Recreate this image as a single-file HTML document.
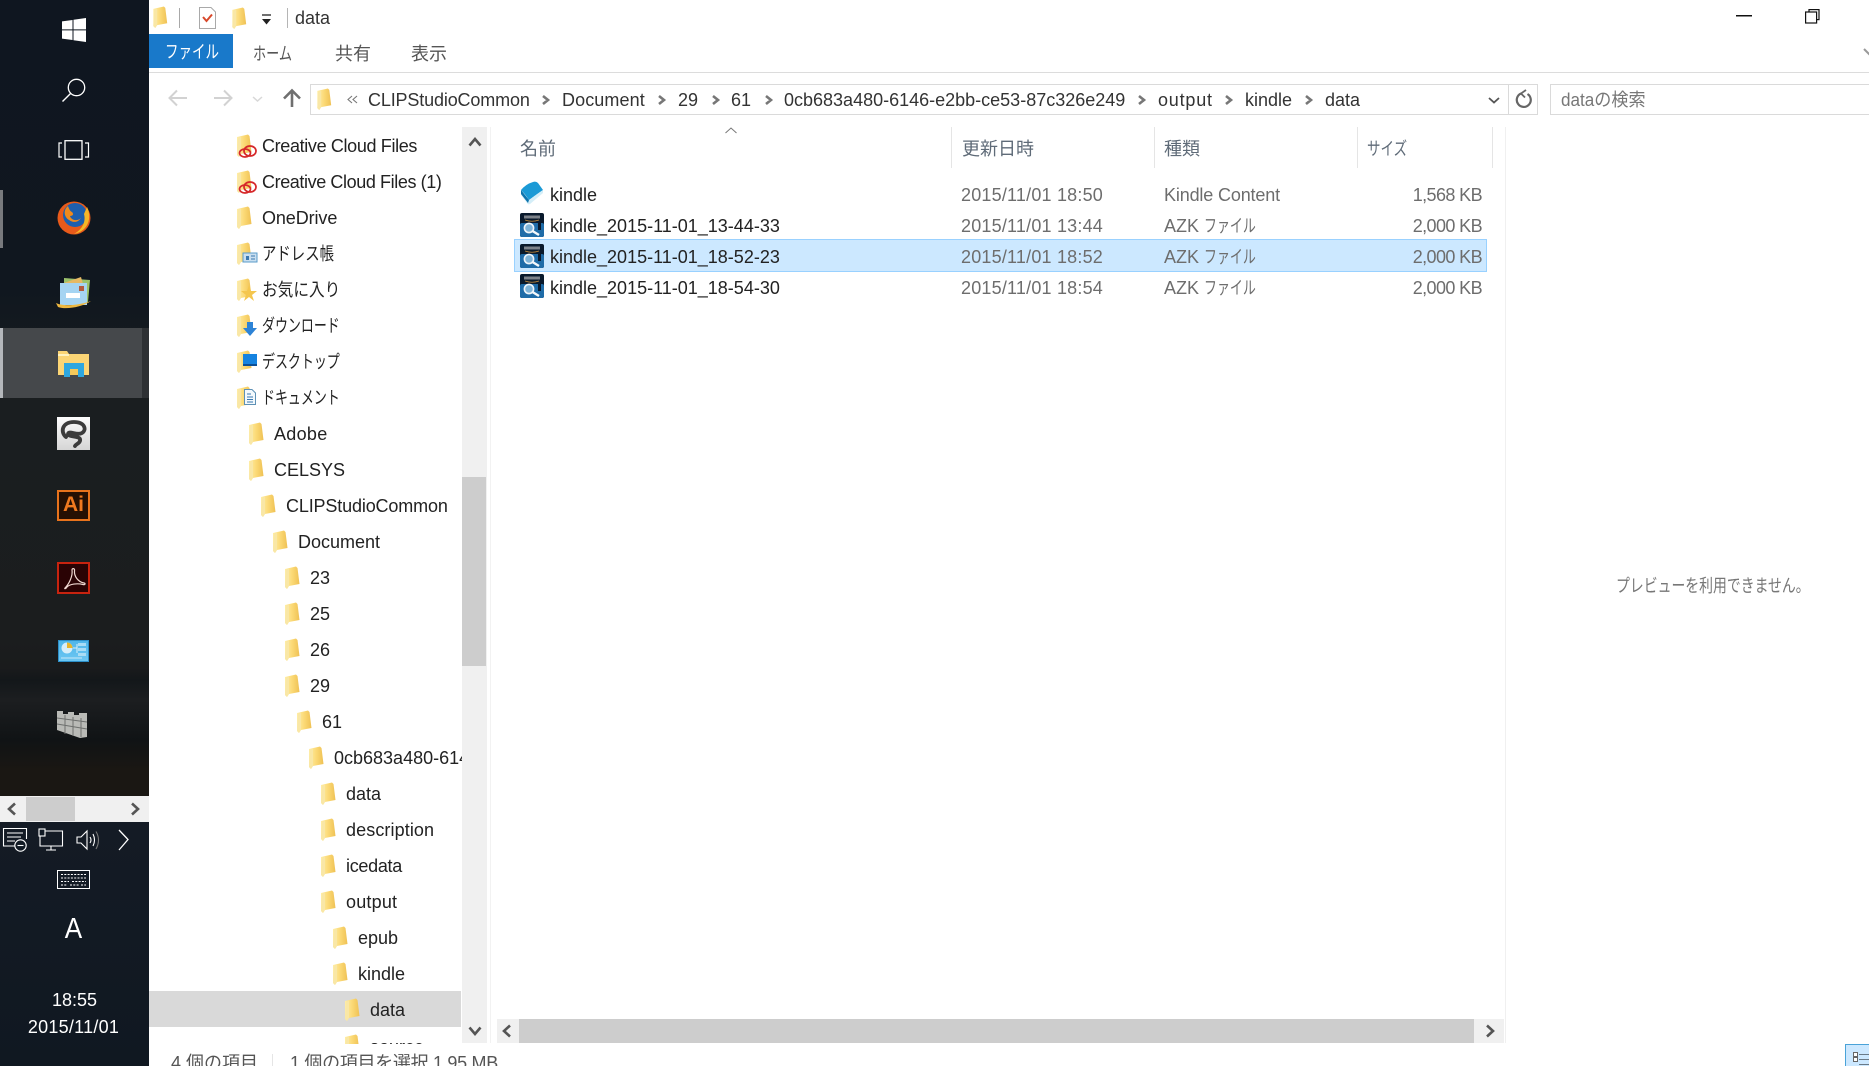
<!DOCTYPE html>
<html lang="ja"><head><meta charset="utf-8"><title>data</title>
<style>
html,body{margin:0;padding:0;width:1869px;height:1066px;overflow:hidden;background:#fff}
body{position:relative;font-family:"Liberation Sans","Noto Sans CJK JP",sans-serif;font-size:18px;color:#222}
.a{position:absolute}
.t{position:absolute;white-space:nowrap;line-height:22px;height:22px}
.k{transform-origin:0 50%}
.s{display:inline-block;transform:scaleX(.72);transform-origin:0 50%;width:48px}
.g{color:#6d6d6d}
.h{color:#5f6b78}
.w{color:#fff}
svg{position:absolute;overflow:visible}
</style></head><body>
<svg width="0" height="0" style="left:0;top:0">
<defs>
<linearGradient id="fg" x1="0" x2="1" y1="0" y2="0"><stop offset="0" stop-color="#ffeea8"/><stop offset=".5" stop-color="#fbd975"/><stop offset="1" stop-color="#efc154"/></linearGradient>
<symbol id="f" viewBox="0 0 15 23"><path d="M0 3 L11 0.500 L12.500 2 L14.500 18 L4 20 L2 23 L0 21Z" fill="url(#fg)"/><path d="M0 21 L1 4 L4 3 L4 20 L2 23Z" fill="#f9e7a6"/></symbol>
<symbol id="z" viewBox="0 0 24 24"><rect width="24" height="24" rx="2" fill="#0a1a2c"/><rect y="10" width="24" height="14" rx="2" fill="#1f6ca8"/><rect x="4" y="2.500" width="16" height="3" fill="#7d838a"/><path d="M5 7 Q12 9.500 19 7" fill="none" stroke="#c28a3a" stroke-width=".8"/><circle cx="9" cy="15" r="4.600" fill="#7fb4d8" stroke="#eef5fa" stroke-width="1.600"/><path d="M12.500 18 L19 22" stroke="#f4f8fb" stroke-width="2.400"/><rect x="18" y="8" width="3" height="9" fill="#0a1a2c"/></symbol>
</defs></svg>

<!-- taskbar -->
<div class="a" style="left:0;top:0;width:149px;height:1066px;background:linear-gradient(#0f1620 0,#10171f 290px,#1a1e20 400px,#1b1d1e 640px,#1a1b1c 668px,#13171a 680px,#1c1e20 700px,#101315 740px,#1a1713 770px,#1a1713 796px,#141b25 822px,#101821 1066px)"></div>
<div class="a" style="left:3px;top:328px;width:139px;height:70px;background:#45484b"></div>
<div class="a" style="left:142px;top:328px;width:7px;height:70px;background:#2e3134"></div>
<div class="a" style="left:0;top:328px;width:3px;height:70px;background:#b4b7bb"></div>
<div class="a" style="left:0;top:190px;width:3px;height:58px;background:#787a7d"></div>
<svg style="left:62px;top:18px" width="24" height="24" viewBox="0 0 24 24"><path d="M0 3.400 L10.500 2 V11.400 H0Z M11.500 1.800 L24 0 V11.400 H11.500Z M0 12.400 H10.500 V22 L0 20.600Z M11.500 12.400 H24 V24 L11.500 22.200Z" fill="#fff"/></svg>
<svg style="left:62px;top:78px" width="24" height="24" viewBox="0 0 24 24"><circle cx="14.500" cy="9.500" r="8.200" fill="none" stroke="#fff" stroke-width="1.300"/><path d="M8.800 15.200 L0.500 23.500" stroke="#fff" stroke-width="1.400"/></svg>
<svg style="left:58px;top:140px" width="32" height="20" viewBox="0 0 32 20"><rect x="7" y=".7" width="17" height="18.600" fill="none" stroke="#fff" stroke-width="1.300"/><path d="M4 3 H1 V17 H4 M27 3 H30.500 V17 H27" fill="none" stroke="#fff" stroke-width="1.200"/></svg>
<svg style="left:57px;top:201px" width="34" height="34" viewBox="0 0 34 34"><circle cx="17" cy="17" r="16.500" fill="#e85a1a"/><circle cx="18" cy="14" r="12" fill="#1e5fae"/><path d="M30 6 C35 16 32 30 17 33 C26 28 29 20 27 13Z" fill="#f6b727"/><path d="M11 5 C6 9 7 16 12 19 C18 23 22 20 24 17 C20 21 14 19 13 15 C16 15 17 13 15 11 C13 10 12 8 11 5Z" fill="#f08a1d"/></svg>
<svg style="left:56px;top:274px" width="36" height="36" viewBox="0 0 36 36"><path d="M8 4 L34 6 L32 28 L8 26Z" fill="#9bc26b"/><path d="M5 10 L25 3 L31 24 L12 30Z" fill="#e6b965"/><path d="M4 9 H31 V31 H4Z" fill="#a5d4f2"/><rect x="10" y="19" width="14" height="5" fill="#fff"/><rect x="23" y="12" width="5" height="5" fill="#b55b3f"/><path d="M0 29 C8 33 24 31 35 27 C26 33 10 36 2 33Z" fill="#eeb73f"/></svg>
<svg style="left:57px;top:349px" width="33" height="28" viewBox="0 0 33 28"><path d="M1 2 H10 L12 5 H32 V26 H1Z" fill="#fbd575"/><path d="M1 5 H12 V7 H1Z" fill="#fff2c0"/><path d="M7 14 H27 V28 H21 V20 H13 V28 H7Z" fill="#2ea7e0"/><rect x="13" y="20" width="8" height="6" fill="#f5c95a"/></svg>
<div class="a" style="left:57px;top:417px;width:33px;height:33px;background:linear-gradient(#fdfdfd,#d5d5d5)"></div>
<svg style="left:57px;top:417px" width="33" height="33" viewBox="0 0 33 33"><path d="M9 20 C3 15 5 5 17 5 C28 5 30 13 25 16 C20 19 12 13 11 17 C11 20 22 19 23 22 C24 26 19 27 18 29" fill="none" stroke="#3c3c3c" stroke-width="3.800" stroke-linecap="round"/></svg>
<div class="a" style="left:57px;top:490px;width:33px;height:31px;box-sizing:border-box;border:2px solid #e8731c;background:#261003"></div>
<div class="t" style="left:57px;top:490px;width:33px;height:31px;line-height:30px;text-align:center;color:#f0791f;font-weight:bold;font-size:21px">Ai</div>
<div class="a" style="left:57px;top:562px;width:33px;height:32px;box-sizing:border-box;border:2px solid #c8230f;background:#2a0304"></div>
<svg style="left:57px;top:562px" width="33" height="32" viewBox="0 0 33 32"><path d="M8 26 C12 22 16 14 15 8 C15 6 18 6 17.500 9 C17 14 21 20 27 21 C29 21.500 28 23 26 22.500 C20 21 13 22 10 25 C9 27 7 27 8 26Z" fill="none" stroke="#efd7d0" stroke-width="1.200"/></svg>
<div class="a" style="left:58px;top:640px;width:31px;height:22px;background:linear-gradient(#4fb6ea,#6cc6f2);border:1px solid #2d8fc8;box-sizing:border-box"></div>
<svg style="left:58px;top:640px" width="31" height="22" viewBox="0 0 31 22"><circle cx="9" cy="8" r="5.500" fill="#d8eef9"/><path d="M9 8 V2.500 A5.500 5.500 0 0 1 14.500 8Z" fill="#e8b52c"/><path d="M15 8 H19 M19 4 V13" stroke="#d8eef9" stroke-width="1"/><path d="M20 3 H28 V6 H20Z M20 8 H28 V11 H20Z M20 13 H28 V16 H20Z" fill="#a9dcf5"/><path d="M3 18 H24" stroke="#a9dcf5" stroke-width="1.500"/></svg>
<svg style="left:57px;top:710px" width="31" height="28" viewBox="0 0 31 28"><path d="M0 1 H6 V4 H11 V2 H17 V5 H22 V3 H30 V27 L23 28 L0 20Z" fill="#b9bab6"/><path d="M0 8 L30 12 M0 14 L30 19 M8 5 V24 M16 7 V26 M24 8 V27" stroke="#6e706e" stroke-width="1"/></svg>
<div class="a" style="left:0;top:796px;width:149px;height:26px;background:#f0f0f0"></div>
<div class="a" style="left:26px;top:797px;width:49px;height:24px;background:#cdcdcd"></div>
<svg style="left:6px;top:802px" width="136" height="14" viewBox="0 0 136 14"><path d="M9 1.500 L3 7 L9 12.500" fill="none" stroke="#555" stroke-width="2.600"/><path d="M126 1.500 L132 7 L126 12.500" fill="none" stroke="#555" stroke-width="2.600"/></svg>
<svg style="left:3px;top:828px" width="126" height="24" viewBox="0 0 126 24" fill="none" stroke="#fff" stroke-width="1.100"><path d="M13 18 H.5 V.5 H23.500 V11"/><path d="M4 5 H20 M4 9 H18 M4 13 H12"/><circle cx="17.500" cy="17.500" r="5.700" fill="#111a24"/><path d="M14.500 17.500 H20.500"/><path d="M37 3 H59.500 V18 H37Z M48 18 V21.500 M43 22 H53"/><rect x="36" y="1" width="6" height="7" fill="#111a24"/><path d="M74 9 H78 L84 3 V21 L78 15 H74Z"/><path d="M87 9 Q89 12 87 15 M90 6 Q93 12 90 18"/><path d="M93 3.500 Q98 12 93 21" stroke="#777"/><path d="M116 2 L125 11.500 L116 22" stroke-width="1.300"/></svg>
<svg style="left:57px;top:870px" width="33" height="19" viewBox="0 0 33 19" fill="none" stroke="#fff" stroke-width="1"><rect x=".5" y=".5" width="32" height="18"/><path d="M4 4.500 H29 M4 8 H29 M4 11.500 H12 M15 11.500 H29 M4 15 H10 M13 15 H22 M24 15 H29" stroke-dasharray="2 1.300"/></svg>
<div class="t w" style="left:0;width:147px;text-align:center;top:914px;height:30px;line-height:30px;font-size:29px;transform:scaleX(.9)">A</div>
<div class="t w" style="left:0;width:149px;text-align:center;top:989px;font-size:18px">18:55</div>
<div class="t w" style="left:0;width:147px;text-align:center;top:1016px;font-size:18px;letter-spacing:.25px">2015/11/01</div>

<!-- title bar -->
<svg style="left:153px;top:6px" width="15" height="22"><use href="#f" width="15" height="22"/></svg>
<div class="a" style="left:179px;top:8px;width:1px;height:20px;background:#a8a8a8"></div>
<svg style="left:199px;top:7px" width="17" height="22" viewBox="0 0 17 22"><path d="M.5 .5 H12 L16.500 5 V21.500 H.5Z" fill="#fff" stroke="#a9a9a9"/><path d="M4 10 L7.500 14 L13 7.500" fill="none" stroke="#d8482a" stroke-width="2"/></svg>
<svg style="left:232px;top:7px" width="15" height="22"><use href="#f" width="15" height="22"/></svg>
<svg style="left:262px;top:15px" width="9" height="10" viewBox="0 0 9 10"><path d="M0 0 H9" stroke="#222" stroke-width="1.300"/><path d="M0 4 H9 L4.500 9.500Z" fill="#222"/></svg>
<div class="a" style="left:287px;top:8px;width:1px;height:20px;background:#b5b5b5"></div>
<div class="t" style="left:295px;top:7px;color:#333">data</div>
<svg style="left:1736px;top:15px" width="16" height="2"><rect width="16" height="1.500" fill="#111"/></svg>
<svg style="left:1805px;top:9px" width="15" height="15" viewBox="0 0 15 15" fill="#fff" stroke="#111" stroke-width="1.200"><rect x="4" y=".6" width="10" height="10"/><rect x=".6" y="3" width="11" height="11"/></svg>
<svg style="left:1864px;top:49px" width="6" height="7" viewBox="0 0 6 7"><path d="M0 0 L6 6" stroke="#999" stroke-width="2"/></svg>

<!-- ribbon -->
<div class="a" style="left:149px;top:34px;width:84px;height:34px;background:#1979ca"></div>
<div class="t w k" style="left:165px;top:41px;transform:scaleX(.75)">ファイル</div>
<div class="t k" style="left:253px;top:43px;color:#555;transform:scaleX(.73)">ホーム</div>
<div class="t" style="left:335px;top:43px;color:#555">共有</div>
<div class="t" style="left:411px;top:43px;color:#555">表示</div>
<div class="a" style="left:149px;top:72px;width:1720px;height:1px;background:#dcdcdc"></div>

<!-- nav -->
<svg style="left:167px;top:88px" width="136" height="20" viewBox="0 0 136 20" fill="none"><path d="M20 10 H3 M10 2.500 L2.500 10 L10 17.500" stroke="#d2d2d2" stroke-width="2"/><path d="M47 10 H64 M57 2.500 L64.500 10 L57 17.500" stroke="#d2d2d2" stroke-width="2"/><path d="M86 9 L90.500 13 L95 9" stroke="#d8d8d8" stroke-width="1.500"/><path d="M125 19 V3 M117 10.500 L125 2.500 L133 10.500" stroke="#6f6f6f" stroke-width="2.600"/></svg>
<div class="a" style="left:310px;top:84px;width:1228px;height:31px;box-sizing:border-box;border:1px solid #dadada;background:#fff"></div>
<svg style="left:317px;top:88px" width="15" height="22"><use href="#f" width="15" height="22"/></svg>
<svg style="left:347px;top:94px" width="11" height="11" viewBox="0 0 11 11" fill="none" stroke="#777" stroke-width="1.100"><path d="M5 2 L1 5.500 L5 9 M10 2 L6 5.500 L10 9"/></svg>
<div class="t" style="left:368px;top:89px;color:#333;letter-spacing:-.15px">CLIPStudioCommon</div>
<div class="t" style="left:562px;top:89px;color:#333;letter-spacing:.1px">Document</div>
<div class="t" style="left:678px;top:89px;color:#333">29</div>
<div class="t" style="left:731px;top:89px;color:#333">61</div>
<div class="t" style="left:784px;top:89px;color:#333">0cb683a480-6146-e2bb-ce53-87c326e249</div>
<div class="t" style="left:1158px;top:89px;color:#333;letter-spacing:.8px">output</div>
<div class="t" style="left:1245px;top:89px;color:#333">kindle</div>
<div class="t" style="left:1325px;top:89px;color:#333">data</div>
<svg style="left:0;top:93px" width="1540" height="14" viewBox="0 0 1540 14" fill="none" stroke="#777" stroke-width="2.600"><path d="M543 3 L548 7 L543 11 M659 3 L664 7 L659 11 M713 3 L718 7 L713 11 M766 3 L771 7 L766 11 M1139 3 L1144 7 L1139 11 M1226 3 L1231 7 L1226 11 M1306 3 L1311 7 L1306 11"/><path d="M1489 5 L1494 9.500 L1499 5" stroke="#555" stroke-width="1.800"/></svg>
<div class="a" style="left:1508px;top:84px;width:1px;height:31px;background:#dadada"></div>
<svg style="left:1515px;top:90px" width="16" height="19" viewBox="0 0 16 19" fill="none" stroke="#666" stroke-width="2.200"><path d="M6 3.500 A7 7 0 1 0 12.500 4"/><path d="M11 0 L6 3.500 L10 7.500" stroke-width="1.800"/></svg>
<div class="a" style="left:1550px;top:84px;width:325px;height:31px;box-sizing:border-box;border:1px solid #dadada"></div>
<div class="t k" style="left:1561px;top:89px;color:#777;transform:scaleX(.95)">dataの検索</div>

<!-- tree -->
<svg style="left:237px;top:134px" width="16" height="23"><use href="#f" width="15" height="23"/></svg>
<svg style="left:238px;top:144px" width="20" height="14" viewBox="0 0 20 14" fill="none" stroke="#d6282a" stroke-width="1.700"><ellipse cx="7" cy="9" rx="5.500" ry="4"/><ellipse cx="12" cy="7" rx="6" ry="5"/></svg>
<div class="t" style="left:262px;top:135px;letter-spacing:-.35px">Creative Cloud Files</div>
<svg style="left:237px;top:170px" width="16" height="23"><use href="#f" width="15" height="23"/></svg>
<svg style="left:238px;top:180px" width="20" height="14" viewBox="0 0 20 14" fill="none" stroke="#d6282a" stroke-width="1.700"><ellipse cx="7" cy="9" rx="5.500" ry="4"/><ellipse cx="12" cy="7" rx="6" ry="5"/></svg>
<div class="t" style="left:262px;top:171px;letter-spacing:-.4px">Creative Cloud Files (1)</div>
<svg style="left:237px;top:206px" width="16" height="23"><use href="#f" width="15" height="23"/></svg>
<div class="t" style="left:262px;top:207px;letter-spacing:-.1px">OneDrive</div>
<svg style="left:237px;top:242px" width="16" height="23"><use href="#f" width="15" height="23"/></svg>
<svg style="left:243px;top:253px" width="14" height="10" viewBox="0 0 14 10"><rect width="14" height="9" fill="#c9dff0" stroke="#5a9bc9"/><rect x="3" y="3" width="3" height="4" fill="#3a78b0"/><path d="M8 3 H12 M8 6 H12" stroke="#3a78b0"/></svg>
<div class="t k" style="left:262px;top:243px;transform:scaleX(.8)">アドレス帳</div>
<svg style="left:237px;top:278px" width="16" height="23"><use href="#f" width="15" height="23"/></svg>
<svg style="left:241px;top:285px" width="16" height="16" viewBox="0 0 16 16"><path d="M8 0 L10 6 L16 6 L11 10 L13 16 L8 12 L3 16 L5 10 L0 6 L6 6Z" fill="#f4c64e"/></svg>
<div class="t k" style="left:262px;top:279px;transform:scaleX(.87)">お気に入り</div>
<svg style="left:237px;top:314px" width="16" height="23"><use href="#f" width="15" height="23"/></svg>
<svg style="left:243px;top:322px" width="14" height="14" viewBox="0 0 14 14"><path d="M4 0 H10 V6 H14 L7 14 L0 6 H4Z" fill="#2d83d6"/></svg>
<div class="t k" style="left:262px;top:315px;transform:scaleX(.72)">ダウンロード</div>
<svg style="left:237px;top:350px" width="16" height="23"><use href="#f" width="15" height="23"/></svg>
<svg style="left:243px;top:352px" width="14" height="16" viewBox="0 0 14 16"><rect y="2" width="14" height="12" fill="#1583e0"/><rect y="12" width="14" height="2" fill="#0b4f96"/></svg>
<div class="t k" style="left:262px;top:351px;transform:scaleX(.72)">デスクトップ</div>
<svg style="left:237px;top:386px" width="16" height="23"><use href="#f" width="15" height="23"/></svg>
<svg style="left:244px;top:389px" width="12" height="16" viewBox="0 0 12 16"><path d="M.5 .5 H8 L11.500 4 V15.500 H.5Z" fill="#f3f9fd" stroke="#5e91b5"/><path d="M3 5 H7 M3 8 H9 M3 10.500 H9 M3 13 H9" stroke="#3a78b0"/></svg>
<div class="t k" style="left:262px;top:387px;transform:scaleX(.72)">ドキュメント</div>
<svg style="left:249px;top:422px" width="16" height="23"><use href="#f" width="15" height="23"/></svg>
<div class="t" style="left:274px;top:423px;letter-spacing:.3px">Adobe</div>
<svg style="left:249px;top:458px" width="16" height="23"><use href="#f" width="15" height="23"/></svg>
<div class="t" style="left:274px;top:459px">CELSYS</div>
<svg style="left:261px;top:494px" width="16" height="23"><use href="#f" width="15" height="23"/></svg>
<div class="t" style="left:286px;top:495px;letter-spacing:-.15px">CLIPStudioCommon</div>
<svg style="left:273px;top:530px" width="16" height="23"><use href="#f" width="15" height="23"/></svg>
<div class="t" style="left:298px;top:531px">Document</div>
<svg style="left:285px;top:566px" width="16" height="23"><use href="#f" width="15" height="23"/></svg>
<div class="t" style="left:310px;top:567px">23</div>
<svg style="left:285px;top:602px" width="16" height="23"><use href="#f" width="15" height="23"/></svg>
<div class="t" style="left:310px;top:603px">25</div>
<svg style="left:285px;top:638px" width="16" height="23"><use href="#f" width="15" height="23"/></svg>
<div class="t" style="left:310px;top:639px">26</div>
<svg style="left:285px;top:674px" width="16" height="23"><use href="#f" width="15" height="23"/></svg>
<div class="t" style="left:310px;top:675px">29</div>
<svg style="left:297px;top:710px" width="16" height="23"><use href="#f" width="15" height="23"/></svg>
<div class="t" style="left:322px;top:711px">61</div>
<svg style="left:309px;top:746px" width="16" height="23"><use href="#f" width="15" height="23"/></svg>
<div class="t" style="left:334px;top:747px;width:128px;overflow:hidden">0cb683a480-6146-e2bb</div>
<svg style="left:321px;top:782px" width="16" height="23"><use href="#f" width="15" height="23"/></svg>
<div class="t" style="left:346px;top:783px">data</div>
<svg style="left:321px;top:818px" width="16" height="23"><use href="#f" width="15" height="23"/></svg>
<div class="t" style="left:346px;top:819px;letter-spacing:.1px">description</div>
<svg style="left:321px;top:854px" width="16" height="23"><use href="#f" width="15" height="23"/></svg>
<div class="t" style="left:346px;top:855px;letter-spacing:-.3px">icedata</div>
<svg style="left:321px;top:890px" width="16" height="23"><use href="#f" width="15" height="23"/></svg>
<div class="t" style="left:346px;top:891px;letter-spacing:.2px">output</div>
<svg style="left:333px;top:926px" width="16" height="23"><use href="#f" width="15" height="23"/></svg>
<div class="t" style="left:358px;top:927px">epub</div>
<svg style="left:333px;top:962px" width="16" height="23"><use href="#f" width="15" height="23"/></svg>
<div class="t" style="left:358px;top:963px">kindle</div>
<div class="a" style="left:149px;top:991px;width:312px;height:36px;background:#d9d9d9"></div>
<svg style="left:345px;top:998px" width="16" height="23"><use href="#f" width="15" height="23"/></svg>
<div class="t" style="left:370px;top:999px">data</div>
<div class="a" style="left:345px;top:1034px;width:125px;height:10px;overflow:hidden"><svg style="left:0;top:0" width="16" height="23"><use href="#f" width="15" height="23"/></svg><div class="t" style="left:25px;top:2px">source</div></div>

<!-- tree scrollbar -->
<div class="a" style="left:462px;top:127px;width:25px;height:916px;background:#f0f0f0"></div>
<div class="a" style="left:462px;top:477px;width:24px;height:189px;background:#cdcdcd"></div>
<svg style="left:468px;top:136px" width="14" height="12" viewBox="0 0 14 12"><path d="M1.500 9.500 L7 3 L12.500 9.500" fill="none" stroke="#555" stroke-width="2.600"/></svg>
<svg style="left:468px;top:1025px" width="14" height="12" viewBox="0 0 14 12"><path d="M1.500 2.500 L7 9 L12.500 2.500" fill="none" stroke="#555" stroke-width="2.600"/></svg>
<div class="a" style="left:490px;top:127px;width:1px;height:916px;background:#f2f2f2"></div>

<!-- file list header -->
<svg style="left:725px;top:127px" width="12" height="7" viewBox="0 0 12 7"><path d="M.5 6 L6 1 L11.500 6" fill="none" stroke="#777" stroke-width="1"/></svg>
<div class="t h" style="left:520px;top:138px">名前</div>
<div class="t h" style="left:962px;top:138px">更新日時</div>
<div class="t h" style="left:1164px;top:138px">種類</div>
<div class="t h k" style="left:1367px;top:138px;transform:scaleX(.75)">サイズ</div>
<div class="a" style="left:951px;top:127px;width:1px;height:41px;background:#e5e5e5"></div>
<div class="a" style="left:1154px;top:127px;width:1px;height:41px;background:#e5e5e5"></div>
<div class="a" style="left:1357px;top:127px;width:1px;height:41px;background:#e5e5e5"></div>
<div class="a" style="left:1492px;top:127px;width:1px;height:41px;background:#e5e5e5"></div>
<div class="a" style="left:1505px;top:127px;width:1px;height:916px;background:#f0f0f0"></div>

<!-- rows -->
<div class="a" style="left:514px;top:239px;width:973px;height:33px;box-sizing:border-box;border:1px solid #99d1ff;background:#cce8ff"></div>
<svg style="left:520px;top:181px" width="24" height="25" viewBox="0 0 24 25"><path d="M1 9 Q6 3 13 1 Q16 0 18 2 L23 9 Q17 13 9 19 Q5 13 1 9Z" fill="#1b9ad6"/><path d="M1 9 L9 19 L23 9 L23 12 L10 23 Q8 24 7 22 L1 14Z" fill="#d4eef8"/><path d="M1 9 L9 19 L8 22 L1 13Z" fill="#0e74ad"/></svg>
<div class="t" style="left:550px;top:184px">kindle</div>
<div class="t g" style="left:961px;top:184px;letter-spacing:.2px">2015/11/01 18:50</div>
<div class="t g" style="left:1164px;top:184px;letter-spacing:-.15px">Kindle Content</div>
<div class="t g" style="left:1342px;top:184px;width:140px;text-align:right;letter-spacing:-.6px">1,568 KB</div>
<svg style="left:520px;top:213px" width="24" height="24"><use href="#z" width="24" height="24"/></svg>
<div class="t" style="left:550px;top:215px">kindle_2015-11-01_13-44-33</div>
<div class="t g" style="left:961px;top:215px;letter-spacing:.2px">2015/11/01 13:44</div>
<div class="t g" style="left:1164px;top:215px">AZK <span class="s">ファイル</span></div>
<div class="t g" style="left:1342px;top:215px;width:140px;text-align:right;letter-spacing:-.6px">2,000 KB</div>
<svg style="left:520px;top:244px" width="24" height="24"><use href="#z" width="24" height="24"/></svg>
<div class="t" style="left:550px;top:246px">kindle_2015-11-01_18-52-23</div>
<div class="t g" style="left:961px;top:246px;letter-spacing:.2px">2015/11/01 18:52</div>
<div class="t g" style="left:1164px;top:246px">AZK <span class="s">ファイル</span></div>
<div class="t g" style="left:1342px;top:246px;width:140px;text-align:right;letter-spacing:-.6px">2,000 KB</div>
<svg style="left:520px;top:274px" width="24" height="24"><use href="#z" width="24" height="24"/></svg>
<div class="t" style="left:550px;top:277px">kindle_2015-11-01_18-54-30</div>
<div class="t g" style="left:961px;top:277px;letter-spacing:.2px">2015/11/01 18:54</div>
<div class="t g" style="left:1164px;top:277px">AZK <span class="s">ファイル</span></div>
<div class="t g" style="left:1342px;top:277px;width:140px;text-align:right;letter-spacing:-.6px">2,000 KB</div>

<!-- h scrollbar -->
<div class="a" style="left:497px;top:1019px;width:1007px;height:24px;background:#f0f0f0"></div>
<div class="a" style="left:519px;top:1019px;width:955px;height:24px;background:#cdcdcd"></div>
<svg style="left:500px;top:1024px" width="998" height="14" viewBox="0 0 998 14"><path d="M10 1.500 L4 7 L10 12.500 M987 1.500 L993 7 L987 12.500" fill="none" stroke="#555" stroke-width="2.600"/></svg>

<!-- preview -->
<div class="t k" style="left:1616px;top:575px;color:#777;font-size:18px;transform:scaleX(.77)">プレビューを利用できません。</div>

<!-- status -->
<div class="t" style="left:171px;top:1052px;color:#555">4 個の項目</div>
<div class="a" style="left:272px;top:1054px;width:1px;height:12px;background:#e5e5e5"></div>
<div class="t" style="left:290px;top:1052px;color:#555;letter-spacing:-.3px">1 個の項目を選択 1.95 MB</div>
<div class="a" style="left:1845px;top:1044px;width:26px;height:24px;box-sizing:border-box;border:1px solid #4aa3d8;background:#cce8ff"></div>
<svg style="left:1853px;top:1052px" width="16" height="14" viewBox="0 0 16 14"><path d="M.5 .5 H4.500 V4.500 H.5Z M.5 5.500 H4.500 V9.500 H.5Z" fill="#fff" stroke="#666"/><path d="M6 2.500 H16 M6 7.500 H16 M6 12.500 H16" stroke="#6a7a88"/></svg>
</body></html>
